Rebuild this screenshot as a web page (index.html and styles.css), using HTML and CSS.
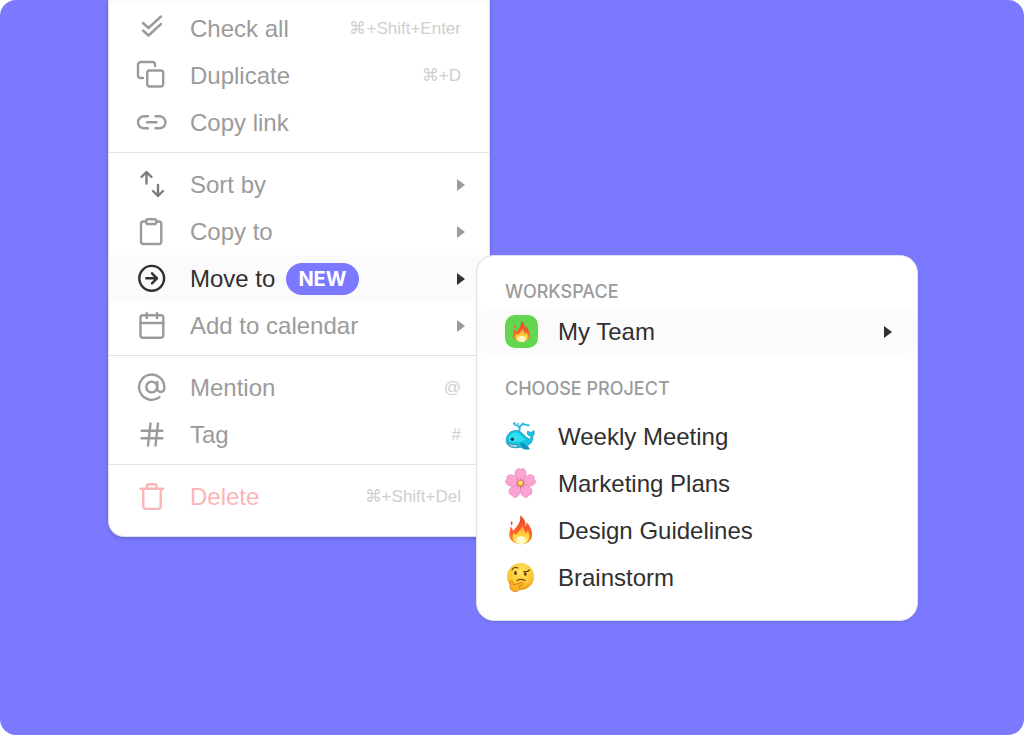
FILE: index.html
```html
<!DOCTYPE html>
<html lang="en">
<head>
  <meta charset="UTF-8">
  <meta name="viewport" content="width=device-width, initial-scale=1.0">
  <title>Move to project</title>
  <link rel="stylesheet" href="styles.css">
</head>
<body>
  <!-- Flame is used twice -->
  <svg class="sprite" aria-hidden="true">
    <defs>
      <linearGradient id="flame-red" x1="0" y1="0" x2="0" y2="1">
        <stop offset="0" stop-color="#e8452c"/>
        <stop offset="0.6" stop-color="#f9652a"/>
        <stop offset="1" stop-color="#fb9b2b"/>
      </linearGradient>
      <linearGradient id="flame-gold" x1="0" y1="0" x2="0" y2="1">
        <stop offset="0" stop-color="#fd9a2e"/>
        <stop offset="0.6" stop-color="#ffd93f"/>
        <stop offset="1" stop-color="#fff3a0"/>
      </linearGradient>
      <symbol id="flame" viewBox="0 0 33 33">
        <path fill="url(#flame-red)" d="M15 1.500c4 2.500 6 6 5.500 11 1-1 1.300-3 1-4.500 3.500 4 6.500 9.500 5.500 14.500-1 5-5.500 7.700-11 7.700S4.700 27 4.300 21.500C4 18 5.500 16 5.600 12.500c1.500 1.200 2.200 2.700 2.400 4.500C12 12.500 16.500 8 15 1.500zM6.500 7c1.300 1 1.500 2.800.2 4.500-1.200-1.300-1.500-3-.2-4.500z"/>
        <path fill="url(#flame-gold)" d="M17.500 11c1 3.500 1.500 5 3.500 8.500.8-.8 1.300-1.800 1.500-3 2 3 2.500 6.500.8 9.500-1.300 2.600-4 4-7.300 4-4.500 0-8.200-2.500-8.300-7 0-1.800.5-3.300 1.300-4.500.5 1.300 1 2 2 2.600C12 18 17 16 17.500 11z"/>
        <ellipse cx="16" cy="26" rx="4.500" ry="4" fill="#fffbd0"/>
      </symbol>
    </defs>
  </svg>

  <main class="stage">
    <nav class="menu" aria-label="Task actions">
      <ul class="group">
        <li>
          <button class="item">
            <svg class="icon" viewBox="0 0 33 33"><path d="M8 11l5.500 5L26 4.500M8 18.500l5.500 5L26 12"/></svg>
            <span>Check all</span>
            <kbd>⌘+Shift+Enter</kbd>
          </button>
        </li>
        <li>
          <button class="item">
            <svg class="icon" viewBox="0 0 33 33"><rect x="12.200" y="11.500" width="16" height="16" rx="2.500"/><path d="M20 7V5.500A2.500 2.500 0 0 0 17.500 3H5.800A2.800 2.800 0 0 0 3 5.800v10.700A2.500 2.500 0 0 0 5.500 19H8"/></svg>
            <span>Duplicate</span>
            <kbd>⌘+D</kbd>
          </button>
        </li>
        <li>
          <button class="item">
            <svg class="icon" viewBox="0 0 33 33"><path d="M13 10.300H9a6 6 0 0 0 0 12h4M20.500 10.300h4a6 6 0 0 1 0 12h-4M12 16.300h9.500"/></svg>
            <span>Copy link</span>
          </button>
        </li>
      </ul>

      <ul class="group">
        <li>
          <button class="item">
            <svg class="icon icon-sort" viewBox="0 0 33 33"><path d="M11.500 15.500V4.500M6.500 9l5-5 5 5M23 17v11M18 23l5 5 5-5"/></svg>
            <span>Sort by</span>
            <i class="arrow"></i>
          </button>
        </li>
        <li>
          <button class="item">
            <svg class="icon" viewBox="0 0 33 33"><path d="M11 6.500H8.500A2.500 2.500 0 0 0 6 9v17.500A2.500 2.500 0 0 0 8.500 29h15.300a2.500 2.500 0 0 0 2.500-2.500V9a2.500 2.500 0 0 0-2.500-2.500h-2.500"/><rect x="11.200" y="4.200" width="10" height="4.800" rx="1.500"/></svg>
            <span>Copy to</span>
            <i class="arrow"></i>
          </button>
        </li>
        <li class="has-submenu">
          <button class="item active" aria-expanded="true">
            <svg class="icon" viewBox="0 0 33 33"><circle cx="16.700" cy="16.300" r="12.400"/><path d="M11.300 16.300h10.500M17 11.300l5 5-5 5"/></svg>
            <span>Move to</span>
            <b class="badge">NEW</b>
            <i class="arrow"></i>
          </button>

          <div class="submenu">
            <h2>WORKSPACE</h2>
            <button class="item active">
              <span class="tile"><svg class="tile-flame" viewBox="0 0 33 33"><use href="#flame"/></svg></span>
              <span>My Team</span>
              <i class="arrow"></i>
            </button>
            <h2>CHOOSE PROJECT</h2>
            <ul class="projects">
              <li>
                <button class="item">
                  <svg class="emoji" viewBox="0 0 33 33">
                    <path fill="none" stroke="#2cb5df" stroke-width="1.800" stroke-linecap="round" d="M14.500 10.500c.7-2-.2-4.500-4-5.500M14.700 8c0-3 3-4.500 7-3"/>
                    <circle cx="9.500" cy="3.500" r="1.500" fill="#39bfe8"/><circle cx="13.200" cy="4" r="1" fill="#39bfe8"/><circle cx="23.200" cy="5.200" r="1.300" fill="#39bfe8"/><circle cx="18" cy="3.800" r="1.300" fill="#39bfe8"/>
                    <path fill="#15c3df" stroke="#1595b4" stroke-width=".7" d="M1.200 20.500C1 14.500 5.500 10.500 11 10.500c6.500 0 8 6.500 13.500 8.500 1.500-.3 1.700-1.700 1-3-2.500-.3-3.800-2-3.200-4.500 1.800 0 3 .6 3.800 1.800.3-1.500 1.300-2.300 2.900-2.500.8 2 .2 4-1.200 5.200.4 5.500-2.300 8.500-5.600 9.500l2.300 3.500c-3 .8-6 .3-8.500-1.800C9 28.700 1.500 27.500 1.200 20.500z"/>
                    <path fill="#32def2" d="M4 17c1.500-3.500 4.500-5 7.500-4.500 4 .6 5.500 5 9 7-5 3-12 3.500-16.500 1.500z"/>
                    <path fill="#b8eaf0" stroke="#247f9a" stroke-width=".7" d="M2 23c3 1.800 6.500 2.200 10 1.500l1 2.200C8.500 28.200 4 26.500 2 23z"/>
                    <path fill="#1493b5" d="M15 23c3-.5 6 1 9 6-4 .5-8-1-9-6z"/>
                    <circle cx="7.300" cy="19.300" r="1.700" fill="#17414f"/>
                  </svg>
                  <span>Weekly Meeting</span>
                </button>
              </li>
              <li>
                <button class="item">
                  <svg class="emoji" viewBox="0 0 33 33">
                    <g fill="#fba3d2" stroke="#e785b8" stroke-width=".6">
                      <path id="petal" d="M15.500 17C10.500 12 8.500 6 11 3c1.500-1.800 3-2 4.500-.5C17 1 18.800 1.200 20 3c2.500 3.500.5 9-4.500 14z"/>
                      <use href="#petal" transform="rotate(72 15.500 16.500)"/>
                      <use href="#petal" transform="rotate(144 15.500 16.500)"/>
                      <use href="#petal" transform="rotate(216 15.500 16.500)"/>
                      <use href="#petal" transform="rotate(288 15.500 16.500)"/>
                    </g>
                    <path stroke="#d0608c" stroke-width=".9" d="M15.500 11.500v10M11 15l9 3M20 15l-9 3M12.500 20.500l6-8M18.500 20.500l-6-8"/>
                    <circle cx="15.500" cy="16.500" r="3" fill="#d98b2b"/>
                    <circle cx="15.500" cy="16" r="2.200" fill="#ffe45c"/>
                  </svg>
                  <span>Marketing Plans</span>
                </button>
              </li>
              <li>
                <button class="item">
                  <svg class="emoji" viewBox="0 0 33 33"><use href="#flame"/></svg>
                  <span>Design Guidelines</span>
                </button>
              </li>
              <li>
                <button class="item">
                  <svg class="emoji" viewBox="0 0 33 33">
                    <defs>
                      <radialGradient id="face" cx=".5" cy=".3" r=".7">
                        <stop offset="0" stop-color="#ffe45e"/>
                        <stop offset=".7" stop-color="#fdc62f"/>
                        <stop offset="1" stop-color="#e99a1c"/>
                      </radialGradient>
                    </defs>
                    <circle cx="15.500" cy="15.500" r="13.500" fill="url(#face)"/>
                    <g fill="none" stroke="#74430f" stroke-width="1.200" stroke-linecap="round">
                      <path d="M7 9c1-2 3.500-3 6-2M18.500 10.500c2.500.5 4.500 0 6-1.500M12 19.500c2.500-1.500 5.500-1.200 8 0"/>
                    </g>
                    <ellipse cx="10.500" cy="12" rx="1.400" ry="1.900" fill="#5b3a14"/>
                    <ellipse cx="20.300" cy="13" rx="1.400" ry="1.800" fill="#5b3a14"/>
                    <path fill="#f9b126" stroke="#d07a12" stroke-width=".8" stroke-linejoin="round" d="M5.500 20.500c1-1.200 2.300-.5 2.500 1l.5 2.300 8-2.300c2-.5 2.500 1.500.8 2.300l-3.300 1.500c1.500 3-.5 5.200-3.500 5.200-3.500 0-5.500-2-5.500-5z"/>
                  </svg>
                  <span>Brainstorm</span>
                </button>
              </li>
            </ul>
          </div>
        </li>
        <li>
          <button class="item">
            <svg class="icon" viewBox="0 0 33 33"><rect x="5.500" y="6.200" width="22.800" height="22.600" rx="2.500"/><path d="M5.500 14h22.800M11.700 4v5M22 4v5"/></svg>
            <span>Add to calendar</span>
            <i class="arrow"></i>
          </button>
        </li>
      </ul>

      <ul class="group">
        <li>
          <button class="item">
            <svg class="icon" viewBox="0 0 33 33"><circle cx="16.700" cy="16" r="5.400"/><path d="M22.300 11v6.500a3.500 3.500 0 0 0 7 0v-1.200a12.600 12.600 0 1 0-4.800 9.800"/></svg>
            <span>Mention</span>
            <kbd>@</kbd>
          </button>
        </li>
        <li>
          <button class="item">
            <svg class="icon" viewBox="0 0 33 33"><path d="M6.500 12.700h21M6.500 20.300h21M15.500 5.500l-2.500 22M23 5.500l-2.500 22"/></svg>
            <span>Tag</span>
            <kbd>#</kbd>
          </button>
        </li>
      </ul>

      <ul class="group">
        <li>
          <button class="item danger">
            <svg class="icon" viewBox="0 0 33 33"><path d="M5.500 8.700h22.700M8.300 8.700v17.500a2.700 2.700 0 0 0 2.700 2.700h12a2.700 2.700 0 0 0 2.700-2.700V8.700M12 8.500V6A1.800 1.800 0 0 1 13.800 4.200h6A1.800 1.800 0 0 1 21.600 6v2.500"/></svg>
            <span>Delete</span>
            <kbd>⌘+Shift+Del</kbd>
          </button>
        </li>
      </ul>
    </nav>
  </main>
</body>
</html>
```
FILE: styles.css
```css
* {
  box-sizing: border-box;
}

body {
  margin: 0;
  background: #fff;
  font-family: "Liberation Sans", Arial, sans-serif;
}

ul {
  list-style: none;
  margin: 0;
  padding: 0;
}

.sprite {
  position: absolute;
  width: 0;
  height: 0;
}

.stage {
  min-height: 100vh;
  padding-left: 108px;
  background: #7b79ff;
  border-radius: 16px;
  overflow: hidden;
}

/* Menu panel, its top runs off the stage */
.menu {
  width: 382px;
  background: linear-gradient(#f8f8f8, #fff 5px);
  border: 1px solid #dedee6;
  border-top: 0;
  border-radius: 0 0 16px 16px;
  box-shadow: 0 2px 4px rgba(0, 0, 0, 0.16);
}

.group {
  padding: 8px 0 6px;
  border-bottom: 1px solid #e2e2e2;
}

.group:first-child {
  padding-top: 5px;
}

.group:last-child {
  padding-bottom: 16px;
  border-bottom: 0;
}

.item {
  display: flex;
  align-items: center;
  width: 100%;
  height: 47px;
  padding: 0 28px 0 26px;
  border: 0;
  background: none;
  color: #9b9b9b;
  font-family: inherit;
  font-size: 24px;
  line-height: 28px;
  text-align: left;
  cursor: pointer;
}

.item.active {
  background: #fbfbfb;
  color: #303030;
}

.item.danger {
  color: #fab6b6;
}

.icon {
  width: 33px;
  height: 33px;
  margin-right: 22px;
  fill: none;
  stroke: currentColor;
  stroke-width: 2.4;
  stroke-linecap: round;
  stroke-linejoin: round;
}

.icon-sort {
  color: #7d7d7d;
}

kbd {
  margin-left: auto;
  color: #cfcfcf;
  font-family: "Liberation Sans", Arial, sans-serif;
  font-size: 17px;
  line-height: 24px;
}

.arrow {
  margin-left: auto;
  margin-right: -4px;
  border-left: 8px solid currentColor;
  border-top: 6px solid transparent;
  border-bottom: 6px solid transparent;
}

.badge {
  margin-left: 11px;
  padding: 0 12px;
  border-radius: 16px;
  background: #7b79ff;
  color: #fff;
  font-family: Inter, sans-serif;
  font-size: 20px;
  line-height: 32px;
}

/* Submenu opens next to "Move to" */
.has-submenu {
  position: relative;
}

.submenu {
  position: absolute;
  top: 0;
  left: 367px;
  z-index: 1;
  width: 442px;
  padding: 24px 0 19px;
  background: #fff;
  border: 1px solid #e0e0e6;
  border-radius: 18px;
  box-shadow: 0 1px 2px rgba(0, 0, 0, 0.1);
}

.submenu h2 {
  margin: 0 28px 4px;
  color: #9b9b9b;
  font-family: Inter, sans-serif;
  font-size: 18px;
  font-weight: 500;
  line-height: 24px;
}

.submenu .item {
  padding: 0 29px 0 28px;
  color: #303030;
}

.submenu .item.active {
  margin-bottom: 22px;
  border-radius: 16px;
}

.projects {
  padding-top: 8px;
}

.emoji,
.tile {
  width: 33px;
  height: 33px;
  margin-right: 20px;
}

.tile {
  display: flex;
  align-items: center;
  justify-content: center;
  border-radius: 10px;
  background: #62d64f;
}

.tile-flame {
  width: 24px;
  height: 24px;
}
```
